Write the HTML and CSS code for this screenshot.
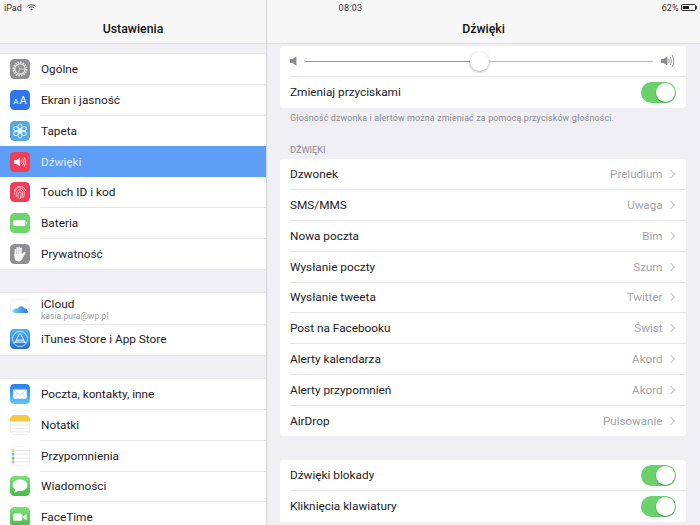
FILE: index.html
```html
<!DOCTYPE html>
<html lang="pl">
<head>
    <meta charset="UTF-8">
    <meta name="viewport" content="width=device-width, initial-scale=1.0">
    <title>Ustawienia</title>
    <link rel="stylesheet" href="styles.css">
</head>
<body>
<div class="screen">
    <!-- Status bar -->
    <div class="status-bar">
        <div class="status-left">iPad
            <svg class="wifi" width="9" height="7" viewBox="0 0 9 7"><path d="M.5 2.4 C2.8 .3 6.2 .3 8.5 2.4 M1.9 3.9 C3.4 2.6 5.6 2.6 7.1 3.9" fill="none" stroke="#333" stroke-width="1"/><path d="M3.2 5.1 C4 4.5 5 4.5 5.8 5.1 L4.5 6.6 Z" fill="#333"/></svg>
        </div>
        <div class="status-time">08:03</div>
        <div class="status-right">62%
            <span class="battery"><span class="battery-level"></span></span><span class="battery-tip"></span>
        </div>
    </div>

    <!-- Left column -->
    <aside class="sidebar">
        <header class="nav-bar">Ustawienia</header>

        <ul class="group">
            <li class="row">
                <svg class="icon" viewBox="0 0 20 20"><rect width="20" height="20" rx="4.5" fill="#8e8e93"/><circle cx="10" cy="10" r="6.6" fill="none" stroke="#ececee" stroke-width="1.6" stroke-dasharray="1.5 1.09"/><circle cx="10" cy="10" r="5.2" fill="none" stroke="#ececee" stroke-width="1.2"/><path d="M10 10 L14.4 10 M10 10 L7.8 6.2 M10 10 L7.8 13.8" stroke="#e4e4e6" stroke-width=".7"/></svg>
                <span class="label">Ogólne</span>
            </li>
            <li class="row">
                <svg class="icon" viewBox="0 0 20 20"><rect width="20" height="20" rx="4.5" fill="#2f75f0"/><text x="10" y="13.6" class="icon-aa"><tspan font-size="8">A</tspan><tspan font-size="11" dx="1">A</tspan></text></svg>
                <span class="label">Ekran i jasność</span>
            </li>
            <li class="row">
                <svg class="icon" viewBox="0 0 20 20"><rect width="20" height="20" rx="4.5" fill="#54a9dd"/><g fill="none" stroke="#e4f3fb" stroke-width=".9"><circle cx="10" cy="10" r="2"/><ellipse cx="10" cy="6.2" rx="2.2" ry="3.2"/><ellipse cx="10" cy="13.8" rx="2.2" ry="3.2"/><ellipse cx="10" cy="6.2" rx="2.2" ry="3.2" transform="rotate(60 10 10)"/><ellipse cx="10" cy="13.8" rx="2.2" ry="3.2" transform="rotate(60 10 10)"/><ellipse cx="10" cy="6.2" rx="2.2" ry="3.2" transform="rotate(-60 10 10)"/><ellipse cx="10" cy="13.8" rx="2.2" ry="3.2" transform="rotate(-60 10 10)"/></g></svg>
                <span class="label">Tapeta</span>
            </li>
            <li class="row selected">
                <svg class="icon" viewBox="0 0 20 20"><rect width="20" height="20" rx="4.5" fill="#ee3e5a"/><path d="M4.2 8 H6.6 L10 5.4 V14.6 L6.6 12 H4.2 Z" fill="#fff"/><path d="M11.5 8 Q12.5 10 11.5 12 M13 6.8 Q14.8 10 13 13.2 M14.5 5.6 Q17 10 14.5 14.4" fill="none" stroke="#fff" stroke-width=".8"/></svg>
                <span class="label">Dźwięki</span>
            </li>
            <li class="row">
                <svg class="icon" viewBox="0 0 20 20"><rect width="20" height="20" rx="4.5" fill="#ee3e5a"/><g fill="none" stroke="#fbd5da" stroke-width=".8"><path d="M4.4 9 C5 2.8 15 2.8 15.6 9"/><path d="M4.6 12.5 C4.4 10 5.2 7 8 6 C11 5 14 7 14.2 10.5 C14.3 12 14.2 14 13.6 15.5"/><path d="M6.3 15 C6 12 6.3 8.6 9.4 7.8 C12 7.3 12.8 10 12.6 12 C12.5 13.5 12.3 15 11.8 16.2"/><path d="M8.2 16.4 C8 13.5 7.8 10 10 9.6 C11.2 9.6 11 12 10.8 14 L10.2 17"/></g></svg>
                <span class="label">Touch ID i kod</span>
            </li>
            <li class="row">
                <svg class="icon" viewBox="0 0 20 20"><rect width="20" height="20" rx="4.5" fill="#6dd56c"/><rect x="3.4" y="7" width="12" height="6" rx="1" fill="#fff"/><rect x="16" y="9" width=".9" height="2" fill="#fff"/></svg>
                <span class="label">Bateria</span>
            </li>
            <li class="row">
                <svg class="icon" viewBox="0 0 20 20"><rect width="20" height="20" rx="4.5" fill="#8e8e93"/><g fill="#fff"><rect x="4.6" y="5" width="1.5" height="8" rx=".75"/><rect x="6.5" y="3" width="1.5" height="8" rx=".75"/><rect x="8.4" y="2.4" width="1.5" height="8" rx=".75"/><rect x="10.3" y="3.4" width="1.5" height="8" rx=".75"/><path d="M4.6 10 H11.8 L13.6 8.2 Q14.5 7.5 15.2 8.1 Q15.7 8.7 15.2 9.4 L12.6 14.6 Q11.4 17.6 8.6 17.6 Q4.6 17.6 4.6 13 Z"/></g></svg>
                <span class="label">Prywatność</span>
            </li>
        </ul>

        <ul class="group">
            <li class="row">
                <svg class="icon" viewBox="0 0 20 20"><defs><linearGradient id="cloud" x1="0" y1="0" x2="1" y2="0"><stop offset="0" stop-color="#6cc6f5"/><stop offset="1" stop-color="#2a78e0"/></linearGradient></defs><rect x=".3" y=".3" width="19.4" height="19.4" rx="4.5" fill="#fff" stroke="#e6e6e8" stroke-width=".6"/><path d="M2.6 13.4 C1 13 1.4 10.6 3.2 10.6 C3.6 9.2 5 8.8 6 9.4 L8 13.4 Z" fill="#a9e0fa"/><path d="M5.6 14 C3.4 14 3.2 11.2 5.2 10.8 C5.6 9.6 6.8 9.4 7.6 9.8 C8.6 6.4 13.4 6.2 14.4 9.6 C16 9.2 17.4 10.2 17.2 11.4 C18.8 11.8 18.6 14 16.8 14 Z" fill="url(#cloud)"/></svg>
                <div class="label-stack">
                    <span class="label">iCloud</span>
                    <span class="sublabel">kasia.pura@wp.pl</span>
                </div>
            </li>
            <li class="row">
                <svg class="icon" viewBox="0 0 20 20"><defs><linearGradient id="store" x1="0" y1="0" x2="0" y2="1"><stop offset="0" stop-color="#4cb4f5"/><stop offset="1" stop-color="#1f6fe0"/></linearGradient></defs><rect width="20" height="20" rx="4.5" fill="url(#store)"/><circle cx="10" cy="10" r="7.6" fill="none" stroke="#fff" stroke-width=".7"/><path d="M10.8 5 L14.4 12.8 M9.2 5 L5.6 12.8 M6.4 11.2 H13.6 M4.4 13.2 H15.6" fill="none" stroke="#fff" stroke-width="1" stroke-linecap="round"/></svg>
                <span class="label">iTunes Store i App Store</span>
            </li>
        </ul>

        <ul class="group">
            <li class="row">
                <svg class="icon" viewBox="0 0 20 20"><defs><linearGradient id="mail" x1="0" y1="0" x2="0" y2="1"><stop offset="0" stop-color="#2a7cf0"/><stop offset="1" stop-color="#5ac8fa"/></linearGradient></defs><rect width="20" height="20" rx="4.5" fill="url(#mail)"/><rect x="3.2" y="5.4" width="13.6" height="9.4" rx=".8" fill="#fff"/><path d="M3.4 5.8 L10 11 L16.6 5.8 M3.4 14.4 L8 9.6 M16.6 14.4 L12 9.6" fill="none" stroke="#9cc4ee" stroke-width=".6"/></svg>
                <span class="label">Poczta, kontakty, inne</span>
            </li>
            <li class="row">
                <svg class="icon" viewBox="0 0 20 20"><rect x=".3" y=".3" width="19.4" height="19.4" rx="4.5" fill="#fff" stroke="#e6e6e8" stroke-width=".6"/><path d="M0 6.4 V4.5 Q0 0 4.5 0 H15.5 Q20 0 20 4.5 V6.4 Z" fill="#f6c945"/><path d="M0 10 H20 M0 13.4 H20 M0 16.8 H20" stroke="#d9d9dc" stroke-width=".6"/></svg>
                <span class="label">Notatki</span>
            </li>
            <li class="row">
                <svg class="icon" viewBox="0 0 20 20"><rect x=".3" y=".3" width="19.4" height="19.4" rx="4.5" fill="#fff" stroke="#ececee" stroke-width=".6"/><rect x="1.8" y="3.2" width="2.6" height="2.6" rx=".6" fill="#f6c945"/><rect x="1.8" y="7" width="2.6" height="2.6" rx=".6" fill="#5ac8fa"/><rect x="1.8" y="10.8" width="2.6" height="2.6" rx=".6" fill="#6dd56c"/><rect x="1.8" y="14.6" width="2.6" height="2.6" rx=".6" fill="#b5b5b8"/><path d="M6 4.5 H20 M6 8.3 H20 M6 12.1 H20 M6 15.9 H20" stroke="#d9d9dc" stroke-width=".6"/></svg>
                <span class="label">Przypomnienia</span>
            </li>
            <li class="row">
                <svg class="icon" viewBox="0 0 20 20"><defs><linearGradient id="msg" x1="0" y1="0" x2="0" y2="1"><stop offset="0" stop-color="#7ae27a"/><stop offset="1" stop-color="#4cb84c"/></linearGradient></defs><rect width="20" height="20" rx="4.5" fill="url(#msg)"/><path d="M10 3.4 C5.4 3.4 2.6 6 2.6 9.2 C2.6 11.2 3.7 12.8 5.4 13.8 C5.2 15 4.5 15.8 3.9 16.4 C5.6 16.4 7 15.7 7.9 14.8 C8.6 15 9.3 15 10 15 C14.6 15 17.4 12.4 17.4 9.2 C17.4 6 14.6 3.4 10 3.4 Z" fill="#fff"/></svg>
                <span class="label">Wiadomości</span>
            </li>
            <li class="row">
                <svg class="icon" viewBox="0 0 20 20"><defs><linearGradient id="ft" x1="0" y1="0" x2="0" y2="1"><stop offset="0" stop-color="#7ae27a"/><stop offset="1" stop-color="#4cb84c"/></linearGradient></defs><rect width="20" height="20" rx="4.5" fill="url(#ft)"/><rect x="3" y="6.4" width="9.4" height="7.4" rx="1.8" fill="#fff"/><path d="M13.2 9.4 L16.6 6.8 V13.4 L13.2 10.8 Z" fill="#fff"/></svg>
                <span class="label">FaceTime</span>
            </li>
        </ul>
    </aside>

    <!-- Right column -->
    <main class="detail">
        <header class="nav-bar">Dźwięki</header>

        <div class="card card-top">
            <div class="row-plain slider-row">
                <svg class="vol" width="7" height="10" viewBox="0 0 7 10"><path d="M0 3 H2.6 L6.4 .2 V9.8 L2.6 7 H0 Z" fill="#8a8a8e"/></svg>
                <div class="slider">
                    <div class="slider-fill"></div>
                    <div class="slider-knob"></div>
                    <div class="slider-rest"></div>
                </div>
                <svg class="vol" width="15" height="14" viewBox="0 0 15 14"><path d="M0 5 H2.6 L6.4 2.2 V11.8 L2.6 9 H0 Z" fill="#8a8a8e"/><path d="M7.6 4.6 Q8.8 7 7.6 9.4 M9.4 3 Q11.4 7 9.4 11 M11.2 1.2 Q14.4 7 11.2 12.8" fill="none" stroke="#8a8a8e" stroke-width=".9"/></svg>
            </div>
            <div class="row-plain">
                <span class="label">Zmieniaj przyciskami</span>
                <div class="switch"><div class="switch-knob"></div></div>
            </div>
        </div>

        <p class="note">Głośność dzwonka i alertów można zmieniać za pomocą przycisków głośności.</p>
        <h2 class="section-title">DŹWIĘKI</h2>

        <div class="card">
            <div class="row-plain"><span class="label">Dzwonek</span><span class="value">Preludium</span><span class="chevron"></span></div>
            <div class="row-plain"><span class="label">SMS/MMS</span><span class="value">Uwaga</span><span class="chevron"></span></div>
            <div class="row-plain"><span class="label">Nowa poczta</span><span class="value">Bim</span><span class="chevron"></span></div>
            <div class="row-plain"><span class="label">Wysłanie poczty</span><span class="value">Szum</span><span class="chevron"></span></div>
            <div class="row-plain"><span class="label">Wysłanie tweeta</span><span class="value">Twitter</span><span class="chevron"></span></div>
            <div class="row-plain"><span class="label">Post na Facebooku</span><span class="value">Świst</span><span class="chevron"></span></div>
            <div class="row-plain"><span class="label">Alerty kalendarza</span><span class="value">Akord</span><span class="chevron"></span></div>
            <div class="row-plain"><span class="label">Alerty przypomnień</span><span class="value">Akord</span><span class="chevron"></span></div>
            <div class="row-plain"><span class="label">AirDrop</span><span class="value">Pulsowanie</span><span class="chevron"></span></div>
        </div>

        <div class="card card-last">
            <div class="row-plain">
                <span class="label">Dźwięki blokady</span>
                <div class="switch"><div class="switch-knob"></div></div>
            </div>
            <div class="row-plain">
                <span class="label">Kliknięcia klawiatury</span>
                <div class="switch"><div class="switch-knob"></div></div>
            </div>
        </div>
    </main>
</div>
</body>
</html>
```

FILE: styles.css
```css
/* Page */
* {
    box-sizing: border-box;
}

body {
    margin: 0;
    background-color: #efeff4;
    font-family: Roboto, "Liberation Sans", sans-serif;
    color: #1c1c1e;
}

.screen {
    position: relative;
    display: grid;
    grid-template-columns: 267px 433px;
    width: 700px;
    height: 525px;
    overflow: hidden;
}

/* Status bar */
.status-bar {
    position: absolute;
    top: 0;
    left: 0;
    right: 0;
    height: 15px;
    display: grid;
    grid-template-columns: 1fr auto 1fr;
    align-items: center;
    padding: 0 3px 0 4px;
    font-size: 9px;
    color: #333;
}

.status-left {
    display: flex;
    align-items: center;
    gap: 5px;
}

.status-right {
    display: flex;
    align-items: center;
    justify-content: flex-end;
    gap: 0;
}

.status-time {
    letter-spacing: 0.3px;
}

.wifi {
    display: block;
}

.battery {
    width: 15px;
    height: 7px;
    margin-left: 2px;
    padding: 1px;
    border: 0.5px solid #333;
    border-radius: 1.5px;
}

.battery-level {
    display: block;
    width: 62%;
    height: 100%;
    background-color: #222;
}

.battery-tip {
    width: 1px;
    height: 3px;
    margin-left: 0.5px;
    background-color: #333;
}

/* Navigation bars */
.nav-bar {
    height: 44px;
    padding-top: 14px;
    display: flex;
    align-items: center;
    justify-content: center;
    background-color: #f7f7f7;
    border-bottom: 1px solid #dcdce0;
    font-size: 12.3px;
    font-weight: 500;
    color: #111;
}

/* Left column */
.sidebar {
    border-right: 1px solid #d4d4d8;
    height: 525px;
    overflow: hidden;
}

.group {
    list-style: none;
    margin: 10px 0 24px;
    padding: 0;
    background-color: #fff;
    box-shadow: 0 -0.5px 0 #dcdce0, 0 0.5px 0 #dcdce0;
}

.row {
    position: relative;
    display: flex;
    align-items: center;
    gap: 11px;
    height: 30.75px;
    padding-left: 10px;
}

.row + .row::before {
    content: "";
    position: absolute;
    top: -0.5px;
    left: 40px;
    right: 0;
    border-top: 1px solid #e6e6e8;
}

.row.selected {
    background-color: #5e9ef4;
    color: #dfeafc;
}

.row.selected::before,
.row.selected + .row::before {
    border-top-color: transparent;
}

.icon {
    flex: none;
    display: block;
    width: 20px;
    height: 20px;
}

.icon-aa {
    fill: #fff;
    text-anchor: middle;
    font-family: Roboto, sans-serif;
}

.label {
    font-size: 11.8px;
    white-space: nowrap;
}

.label-stack {
    display: flex;
    flex-direction: column;
    padding-top: 1px;
    line-height: 12px;
}

.sublabel {
    margin-top: 2px;
    font-size: 8.4px;
    line-height: 9px;
    letter-spacing: 0.1px;
    color: #9a9a9f;
}

/* Right column */
.detail {
    height: 525px;
    overflow: hidden;
}

.card {
    margin: 0 14px 0 13px;
    background-color: #fff;
    border-radius: 3px;
}

.card-top {
    margin-top: 2px;
}

.card-last {
    margin-top: 24px;
}

.row-plain {
    position: relative;
    display: flex;
    align-items: center;
    height: 30.8px;
    padding: 0 10px;
}

.row-plain + .row-plain::before {
    content: "";
    position: absolute;
    top: -0.5px;
    left: 10px;
    right: 0;
    border-top: 1px solid #e6e6e8;
}

.value {
    margin-left: auto;
    font-size: 11.6px;
    color: #a3a3a8;
}

.chevron {
    width: 6px;
    height: 6px;
    margin: 0 2.5px 0 5px;
    border-top: 1px solid #c4c4c8;
    border-right: 1px solid #c4c4c8;
    transform: rotate(45deg);
}

/* Volume slider */
.slider-row {
    gap: 8px;
}

.vol {
    flex: none;
    display: block;
}

.slider {
    flex: 1;
    display: flex;
    align-items: center;
}

.slider-fill {
    width: 165px;
    height: 1px;
    background-color: #5e9ef4;
}

.slider-knob {
    flex: none;
    width: 19px;
    height: 19px;
    border-radius: 50%;
    background-color: #fff;
    box-shadow: 0 1px 3px rgba(0, 0, 0, 0.35);
}

.slider-rest {
    flex: 1;
    height: 1px;
    background-color: #b9b9bd;
}

/* Switch */
.switch {
    margin-left: auto;
    width: 35px;
    height: 21px;
    padding: 1px;
    display: flex;
    justify-content: flex-end;
    border-radius: 11px;
    background-color: #6bd16b;
}

.switch-knob {
    width: 19px;
    height: 19px;
    border-radius: 50%;
    background-color: #fff;
    box-shadow: 0 1px 2px rgba(0, 0, 0, 0.3);
}

/* Group captions */
.note {
    margin: 5px 23px 0;
    font-size: 8.9px;
    line-height: 11px;
    letter-spacing: 0.15px;
    color: #8a8a8f;
}

.section-title {
    margin: 21px 23px 4.3px;
    font-size: 9.2px;
    font-weight: 400;
    line-height: 10px;
    color: #8a8a8f;
}
```
